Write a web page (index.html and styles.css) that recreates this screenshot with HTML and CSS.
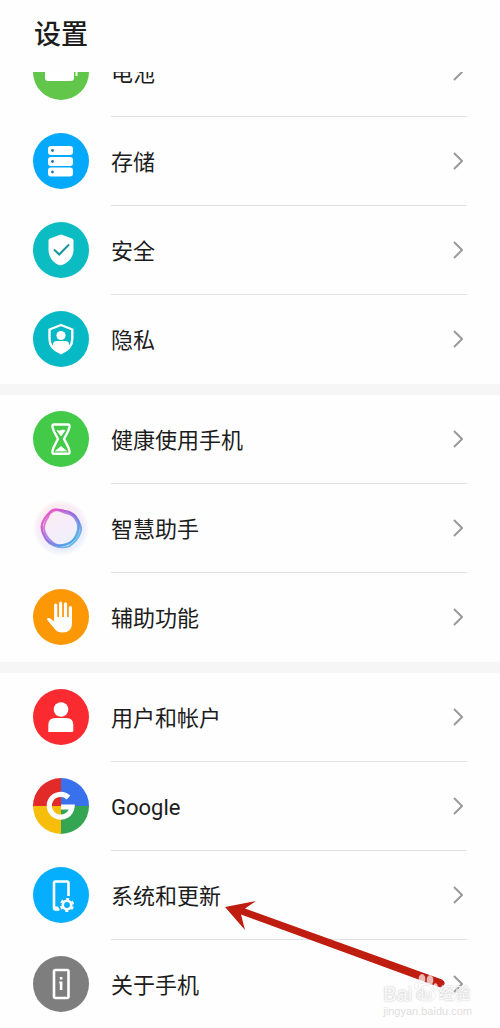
FILE: index.html
```html
<!DOCTYPE html>
<html lang="zh-CN">
<head>
<meta charset="utf-8">
<meta name="viewport" content="width=device-width, initial-scale=1">
<title>设置</title>
<link rel="stylesheet" href="styles.css">
</head>
<body>
<div class="screen">
  <header class="header"><h1 class="title">设置</h1></header>
  <main class="content">
    <ul class="group group-scrolled">
      <li><a class="row" href="#battery">
        <svg class="icon" viewBox="0 0 56 56" aria-hidden="true"><circle cx="28" cy="28" r="28" fill="#62c64b"/><rect x="12" y="19" width="29" height="18" rx="3" fill="#fff"/><path d="M43.500 23v9" stroke="#fff" stroke-width="2"/></svg>
        <span class="body"><span class="label">电池</span><svg class="chevron" viewBox="0 0 10 18" aria-hidden="true"><path d="M1 1l8 8-8 8"/></svg></span></a></li>
      <li><a class="row" href="#storage">
        <svg class="icon" viewBox="0 0 56 56" aria-hidden="true"><circle cx="28" cy="28" r="28" fill="#05a9fb"/><g fill="#fff"><rect x="15" y="13" width="25" height="9" rx="3"/><rect x="15" y="24" width="25" height="9" rx="3"/><rect x="15" y="34.500" width="25" height="9" rx="3"/></g><g fill="#2878a8"><circle cx="19.500" cy="17.500" r="1.400"/><circle cx="19.500" cy="28.500" r="1.400"/><circle cx="19.500" cy="39" r="1.400"/></g></svg>
        <span class="body"><span class="label">存储</span><svg class="chevron" viewBox="0 0 10 18" aria-hidden="true"><path d="M1 1l8 8-8 8"/></svg></span></a></li>
      <li><a class="row" href="#security">
        <svg class="icon" viewBox="0 0 56 56" aria-hidden="true"><circle cx="28" cy="28" r="28" fill="#0bbcc2"/><path d="M26.500 13q1.500-.8 3 0l9.500 3.500q1.500.7 1.500 2V28c0 7-5 12.500-11.500 15q-1.500.6-3 0C20 40.500 15.500 35 15.500 28v-9.500q0-1.300 1.500-2z" fill="#fff"/><path d="M21 27.500l5.200 5L36 22.500" fill="none" stroke="#15989c" stroke-width="2"/></svg>
        <span class="body"><span class="label">安全</span><svg class="chevron" viewBox="0 0 10 18" aria-hidden="true"><path d="M1 1l8 8-8 8"/></svg></span></a></li>
      <li><a class="row" href="#privacy">
        <svg class="icon" viewBox="0 0 56 56" aria-hidden="true"><circle cx="28" cy="28" r="28" fill="#06b9c4"/><path d="M28 14l11.300 4.500V28c0 7-5 11.500-11.300 14.200C21.500 39.500 16.500 35 16.500 28v-9.500z" fill="none" stroke="#fff" stroke-width="2.400" stroke-linejoin="round"/><circle cx="28" cy="24.500" r="4.600" fill="#fff"/><path d="M20 35.500v-2q0-3.500 3.500-3.500h9q3.500 0 3.500 3.500v2q-3 4.500-8 6.500-5-2-8-6.500z" fill="#fff"/></svg>
        <span class="body"><span class="label">隐私</span><svg class="chevron" viewBox="0 0 10 18" aria-hidden="true"><path d="M1 1l8 8-8 8"/></svg></span></a></li>
    </ul>
    <ul class="group">
      <li><a class="row" href="#wellbeing">
        <svg class="icon" viewBox="0 0 56 56" aria-hidden="true"><circle cx="28" cy="28" r="28" fill="#43ca48"/><path d="M21 13.500h14q2 0 1.500 2.500c-1 5-3.500 8-5.500 12 2 4 4.500 7 5.500 12q.5 2.800-1.500 2.800H21q-2 0-1.500-2.800c1-5 3.500-8 5.500-12-2-4-4.500-7-5.500-12q-.5-2.500 1.500-2.500z" fill="none" stroke="#fff" stroke-width="2.400" stroke-linejoin="round"/><path d="M24 19.500q2 1 4 0t4 0l-4 5.500zM28 35.500l5.500 4.500h-11z" fill="#fff" stroke="#fff" stroke-width=".8" stroke-linejoin="round"/></svg>
        <span class="body"><span class="label">健康使用手机</span><svg class="chevron" viewBox="0 0 10 18" aria-hidden="true"><path d="M1 1l8 8-8 8"/></svg></span></a></li>
      <li><a class="row" href="#assistant">
        <svg class="icon" viewBox="0 0 56 56" aria-hidden="true"><defs><linearGradient id="ring" x1="0.100" y1="0.100" x2="0.850" y2="0.850"><stop offset="0" stop-color="#f04fc4"/><stop offset=".5" stop-color="#8b62dc"/><stop offset="1" stop-color="#3ea6e6"/></linearGradient><linearGradient id="tint" x1="0.200" y1="0" x2="0.700" y2="1"><stop offset="0" stop-color="#fceaea"/><stop offset=".5" stop-color="#f7edfa"/><stop offset="1" stop-color="#e6f1fb"/></linearGradient><radialGradient id="fade"><stop offset=".8" stop-color="#fefefe" stop-opacity="0"/><stop offset="1" stop-color="#fefefe"/></radialGradient></defs><circle cx="28" cy="28" r="28" fill="url(#tint)"/><circle cx="28" cy="28" r="28.500" fill="url(#fade)"/><g fill="none" stroke="url(#ring)" stroke-width="1.900" stroke-opacity=".75" transform="translate(-.5 -.5) scale(1.040)"><path d="M18 11c4-4 8 0 13 0 6 0 9 3 12 8 3 4 5 8 3 13-2 6-6 10-11 13-5 2-10 1-15-1-6-2-8-7-10-12-2-5-2-8 1-12 2-4 4-7 7-9z"/><path d="M20 10c5-1 8 2 12 3 6 1 9 4 11 9 2 5 1 8-1 12-2 5-5 8-10 9-5 2-10 1-14-3-4-3-6-7-7-12 0-5 2-8 4-11 1-3 2-6 5-7z"/><path d="M17 13c4-3 9-4 14-2 5 1 11 4 13 9 2 6 1 11-2 16-3 4-8 8-14 8-6 1-10-1-14-5-4-5-6-10-5-15 1-5 4-8 8-11z"/></g></svg>
        <span class="body"><span class="label">智慧助手</span><svg class="chevron" viewBox="0 0 10 18" aria-hidden="true"><path d="M1 1l8 8-8 8"/></svg></span></a></li>
      <li><a class="row" href="#accessibility">
        <svg class="icon" viewBox="0 0 56 56" aria-hidden="true"><circle cx="28" cy="28" r="28" fill="#fc9706"/><path d="M22.700 16v15M27.600 14.200V30M32.500 14.800V30M37.400 18.500V33" fill="none" stroke="#fff" stroke-width="3.200" stroke-linecap="round"/><path d="M21.100 28h17.900v6.500q0 9-9.500 9c-4 0-6.500-1.500-8.500-4.500l-6.700-8q-1-1.500.5-2 1.700-.5 3.200 1l3.100 2.600z" fill="#fff"/></svg>
        <span class="body"><span class="label">辅助功能</span><svg class="chevron" viewBox="0 0 10 18" aria-hidden="true"><path d="M1 1l8 8-8 8"/></svg></span></a></li>
    </ul>
    <ul class="group">
      <li><a class="row" href="#accounts">
        <svg class="icon" viewBox="0 0 56 56" aria-hidden="true"><circle cx="28" cy="28" r="28" fill="#f92b30"/><circle cx="28" cy="20.500" r="7.300" fill="#fff"/><path d="M15.300 43v-7q0-7 7-7h11q7 0 7 7v5.500q0 1.500-1.500 1.500z" fill="#fff"/></svg>
        <span class="body"><span class="label">用户和帐户</span><svg class="chevron" viewBox="0 0 10 18" aria-hidden="true"><path d="M1 1l8 8-8 8"/></svg></span></a></li>
      <li><a class="row" href="#google">
        <svg class="icon" viewBox="0 0 56 56" aria-hidden="true"><path d="M28 28V0A28 28 0 0 0 0 28z" fill="#e22b29"/><path d="M28 28h28A28 28 0 0 0 28 0z" fill="#3970ec"/><path d="M28 28H0a28 28 0 0 0 28 28z" fill="#f7bd0b"/><path d="M28 28v28a28 28 0 0 0 28-28z" fill="#33a553"/><path d="M35.500 19.500A11.400 11.400 0 1 0 39 29H28" fill="none" stroke="#fff" stroke-width="5.200"/></svg>
        <span class="body"><span class="label">Google</span><svg class="chevron" viewBox="0 0 10 18" aria-hidden="true"><path d="M1 1l8 8-8 8"/></svg></span></a></li>
      <li><a class="row" href="#system">
        <svg class="icon" viewBox="0 0 56 56" aria-hidden="true"><circle cx="28" cy="28" r="28" fill="#06aefe"/><path d="M35.500 29V16q0-1.500-1.500-1.500H22.500q-1.500 0-1.500 1.500v25q0 1.500 1.500 1.500H26" fill="none" stroke="#fff" stroke-width="2.600"/><path d="M21 39.500h4l2 3.800h-5z" fill="#fff"/><circle cx="34" cy="38" r="4.200" fill="none" stroke="#fff" stroke-width="2.600"/><circle cx="34" cy="38" r="6" fill="none" stroke="#fff" stroke-width="2.200" stroke-dasharray="3 3.283" stroke-dashoffset="-1.600"/></svg>
        <span class="body"><span class="label">系统和更新</span><svg class="chevron" viewBox="0 0 10 18" aria-hidden="true"><path d="M1 1l8 8-8 8"/></svg></span></a></li>
      <li><a class="row" href="#about">
        <svg class="icon" viewBox="0 0 56 56" aria-hidden="true"><circle cx="28" cy="28" r="28" fill="#7e7e7e"/><rect x="21" y="14" width="14.500" height="28" rx="1.500" fill="none" stroke="#fff" stroke-width="2.600"/><path d="M26.800 21h2.600v2.600h-2.600zM26.300 25.500h3.100V34h-2.600v-6.500h-.5z" fill="#fff"/></svg>
        <span class="body"><span class="label">关于手机</span><svg class="chevron" viewBox="0 0 10 18" aria-hidden="true"><path d="M1 1l8 8-8 8"/></svg></span></a></li>
    </ul>
  </main>
  <svg class="pointer" viewBox="0 0 222 90" aria-hidden="true"><path d="M1 8L32 2 21 9.500 218 80.500Q222 83 220 86t-5 2L17 15.500 21 31z" fill="#bf1d0f"/></svg>
  <div class="watermark">
    <svg class="paw" viewBox="0 0 24 28" aria-hidden="true"><ellipse cx="8" cy="5" rx="3" ry="4.500"/><ellipse cx="16" cy="6" rx="3" ry="4.500"/><ellipse cx="2.500" cy="12" rx="2" ry="3.500"/><ellipse cx="21.500" cy="13" rx="2" ry="3.500"/><path fill="none" d="M12 11c4 0 5 4 8 7 3 4 0 9-4 9H8c-4 0-7-5-4-9 3-3 4-7 8-7z"/></svg>
    <span class="brand"><span>Bai</span><span class="du">du</span><span class="cn">经验</span></span>
    <span class="site">jingyan.baidu.com</span>
  </div>
</div>
</body>
</html>
```
FILE: styles.css
```css
* {
  box-sizing: border-box;
}

body {
  margin: 0;
  background: #fefefe;
  color: #1c1c1c;
  font-family: Roboto, "Noto Sans CJK SC", sans-serif;
}

.screen {
  position: relative;
  display: flex;
  flex-direction: column;
  height: 100vh;
  overflow: hidden;
}

.header {
  display: flex;
  flex: none;
  align-items: center;
  height: 72px;
  padding: 0 34px 2px;
}

.title {
  margin: 0;
  font-size: 27px;
  font-weight: 500;
  line-height: 40px;
}

.content {
  flex: 1;
  min-height: 0;
  overflow-y: auto;
  scrollbar-width: none;
}

.group {
  margin: 0;
  padding: 0;
  list-style: none;
}

.group + .group {
  border-top: 11px solid #f6f6f6;
}

.group-scrolled {
  margin-top: -44px;
}

.row {
  display: flex;
  gap: 22px;
  align-items: center;
  height: 89px;
  padding: 0 33px;
  color: inherit;
  text-decoration: none;
}

.icon {
  flex: none;
  width: 56px;
  height: 56px;
  margin-bottom: 1px;
}

.body {
  display: flex;
  flex: 1;
  align-items: center;
  justify-content: space-between;
  height: 100%;
  padding-right: 4px;
  border-bottom: 1px solid #e2e2e2;
}

li:last-child .body {
  border-bottom-color: transparent;
}

.label {
  padding-top: 3px;
  font-size: 22px;
  line-height: 32px;
}

.chevron {
  width: 10px;
  height: 18px;
  fill: none;
  stroke: #9a9a9a;
  stroke-width: 2;
}

.pointer {
  position: absolute;
  top: 899px;
  left: 224px;
  width: 222px;
  height: 90px;
  pointer-events: none;
}

.watermark {
  position: absolute;
  right: 28px;
  bottom: 10px;
  display: flex;
  flex-direction: column;
  color: #ffffffe6;
  font-family: "Liberation Sans", "Noto Sans CJK SC", sans-serif;
  text-shadow: 0 0 2px #b4b4b4;
  white-space: nowrap;
  pointer-events: none;
}

.brand {
  display: flex;
  align-items: center;
  font-size: 20px;
  line-height: 20px;
}

.du {
  padding-left: 4px;
  font-size: 14px;
}

.cn {
  padding-left: 7px;
  font-size: 16px;
}

.site {
  color: #dedede;
  font-size: 11px;
  line-height: 14px;
  text-shadow: none;
}

.paw {
  position: absolute;
  top: -10px;
  left: 31px;
  width: 24px;
  height: 28px;
  fill: #ffffffb3;
  stroke: #dddddd80;
  stroke-width: 1;
}
```
